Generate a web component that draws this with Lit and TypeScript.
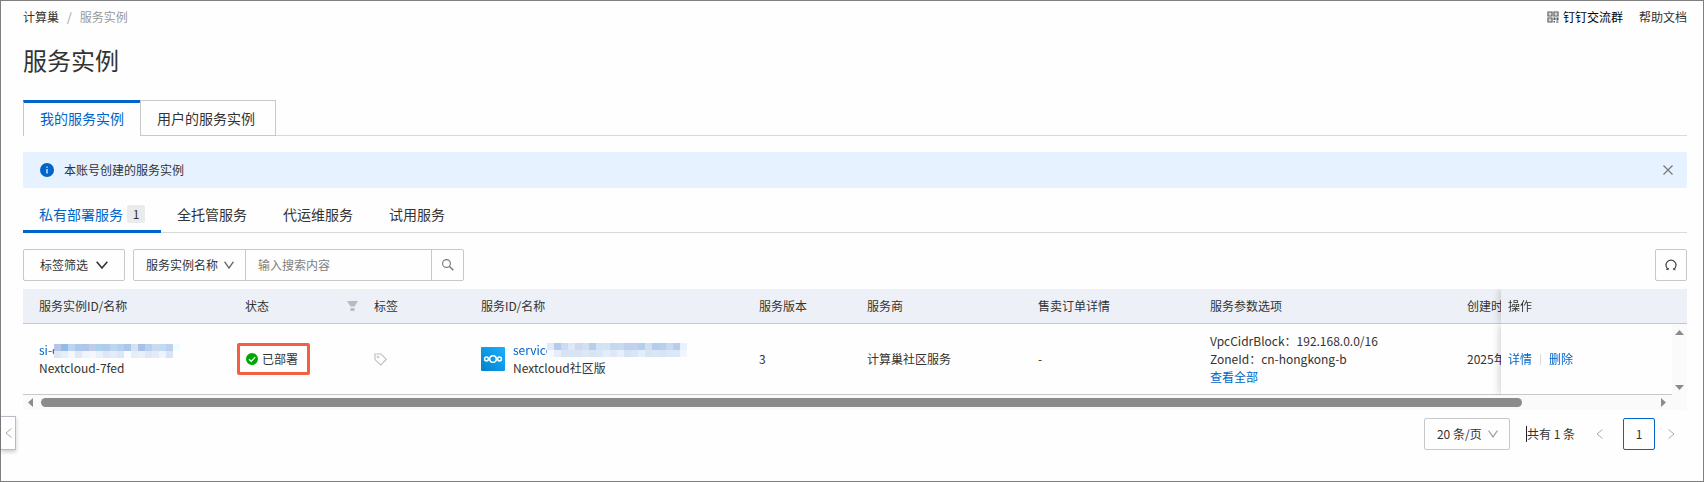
import { LitElement, html, css, svg } from "lit";
import { customElement } from "lit/decorators.js";

const MASK_A = [
  ["#b8c6e6", "#92bbe6", "#bcd4f0", "#adc8ea", "#adc6ea", "#c0cdea", "#acd0ec", "#b2cbec", "#bcd6f0", "#b4d0ee", "#acc6ea", "#d8e0f4", "#a6c0e6", "#b8cfee", "#cdd9ee", "#bfdcf2", "#bdd0ee", "#f2fbff"],
  ["#dce8f6", "#e6eefa", "#f4f8fe", "#dfe9f6", "#eef4fc", "#f4f8fe", "#e9f0fa", "#dce8f6", "#e2ecf8", "#dae8f6", "#f8fbff", "#e4eef8", "#e6f0fa", "#dde8f6", "#e2ecf6", "#eef4fb", "#d6e4f4", "#fefefe"],
];
const MASK_B = [
  ["#dfeaf6", "#b4cbec", "#cbdcf2", "#dde8f6", "#cfd9ee", "#cfe0f2", "#b8cfec", "#d3e2f4", "#d4e2f4", "#c3d9f0", "#c8daf0", "#bed2ee", "#c3d0ea", "#b2cfee", "#d0e0f2", "#b6cdec", "#b9d0ec", "#c9daf0", "#b6cdec", "#e8f2fc"],
  ["#f6fafe", "#e7eefa", "#d8e4f4", "#d6e4f4", "#d8e4f4", "#dce8f6", "#d8e4f4", "#d9e6f6", "#e2eefa", "#dde9f6", "#e6f0fa", "#d3e2f4", "#d9e6f6", "#e2eefa", "#d8e4f4", "#d9e6f6", "#d6e4f4", "#dbe7f6", "#dbe9f6", "#eff6fd"],
];

const mosaic = (rows: string[][]) => html`<svg class="mosaic" width=${rows[0].length * 7} height="14" shape-rendering="crispEdges" aria-hidden="true">
  ${rows.map((r, y) => r.map((c, x) => svg`<rect x=${x * 7} y=${y * 7} width="7" height="7" fill=${c}></rect>`))}
</svg>`;

const chevron = (w: number, h: number, color: string, sw: number) => html`<svg width=${w} height=${h} viewBox="0 0 12 8" preserveAspectRatio="none" aria-hidden="true">
  <path d="M.7 .7L6 7L11.3 .7" fill="none" stroke=${color} stroke-width=${sw}></path>
</svg>`;

@customElement("app-root")
export class AppRoot extends LitElement {
  static styles = css`
    :host {
      display: block;
      font-family: "Noto Sans CJK SC", sans-serif;
      font-size: 12px;
      line-height: 18px;
      color: #333;
    }
    * { box-sizing: border-box; }
    button, input, select { font: inherit; color: inherit; margin: 0; }
    button { cursor: pointer; padding: 0; background: none; border: 0; }
    a { color: #0064c8; text-decoration: none; }
    svg { display: block; flex: none; }
    .page {
      position: relative;
      min-height: 100vh;
      border: 1px solid #7f7f7f;
      background: #fefefe;
      padding: 6px 16px 31px 22px;
    }
    .top { display: flex; justify-content: space-between; align-items: center; height: 20px; }
    .crumbs, .help { display: flex; align-items: center; }
    .crumbs { gap: 8px; color: #999; }
    .crumbs a, .help a { color: #333; }
    .help { gap: 16px; }
    .help .ding { display: flex; align-items: center; gap: 4px; color: #000; }
    h1 { margin: 15px 0 22px; font-size: 24px; line-height: 36px; font-weight: 400; }
    .cards { display: flex; height: 36px; border-bottom: 1px solid #d9d9d9; }
    .cards button {
      height: 36px;
      padding: 0 20px 0 16px;
      font-size: 14px;
      border: 1px solid #c8c8c8;
    }
    .cards .on {
      padding: 0 16px 3px;
      color: #0064c8;
      background: #fefefe;
      border-top: 3px solid #0064c8;
      border-right: 0;
      border-bottom: 0;
    }
    .alert {
      display: flex;
      align-items: center;
      height: 36px;
      margin-top: 16px;
      padding: 0 14px 0 17px;
      gap: 10px;
      background: #e6f2ff;
      border-radius: 2px;
    }
    .alert .msg { flex: 1; }
    .tabs { display: flex; height: 45px; border-bottom: 1px solid #d9d9d9; }
    .tabs button {
      display: flex;
      align-items: center;
      gap: 4px;
      height: 45px;
      padding: 6px 20px 0 16px;
      font-size: 14px;
    }
    .tabs .on { padding: 9px 16px 0; color: #0064c8; border-bottom: 3px solid #0064c8; }
    .count {
      min-width: 18px;
      border-radius: 2px;
      background: #ebebeb;
      color: #333;
      font-size: 12px;
      text-align: center;
    }
    .tools { display: flex; gap: 8px; margin: 16px 0 8px; }
    .tools > button, .search { height: 32px; border: 1px solid #c8c8c8; border-radius: 2px; }
    .filter { display: flex; align-items: center; gap: 8px; padding: 0 16px; }
    .search { display: flex; }
    .picker { position: relative; display: flex; align-items: center; }
    .picker svg { position: absolute; right: 11px; pointer-events: none; }
    .picker select {
      appearance: none;
      width: 100%;
      height: 100%;
      padding: 0 12px;
      border: 0;
      background: none;
      outline: 0;
    }
    .search .picker { width: 111px; }
    .search input {
      width: 187px;
      padding: 0 12px;
      border: 0;
      border-left: 1px solid #c8c8c8;
      border-right: 1px solid #c8c8c8;
      background: none;
      outline: 0;
    }
    .search input::placeholder { color: #808080; opacity: 1; }
    .search button { width: 31px; display: grid; place-items: center; }
    .tools .refresh { width: 32px; margin-left: auto; display: grid; place-items: center; }
    .grid { position: relative; overflow: hidden; }
    table {
      width: 1802px;
      min-width: 100%;
      table-layout: fixed;
      border-collapse: separate;
      border-spacing: 0;
    }
    th, td { padding: 0 8px; text-align: left; font-weight: 400; white-space: nowrap; border-bottom: 1px solid #c8c8c8; }
    th { height: 35px; background: #edf1f7; }
    td { height: 71px; padding: 8px; }
    th:first-child, td:first-child { padding-left: 16px; }
    .c1 { width: 214px; } .c2 { width: 129px; } .c3 { width: 107px; } .c4 { width: 278px; }
    .c5 { width: 108px; } .c6 { width: 171px; } .c7 { width: 172px; } .c8 { width: 257px; }
    .c10 { width: 186px; }
    th.fixed, td.fixed { position: sticky; right: 0; padding-left: 7px; box-shadow: -1px 0 8px rgba(0, 0, 0, 0.2); clip-path: inset(0 0 0 -12px); }
    td.fixed { background: #fefefe; }
    .th { display: flex; justify-content: space-between; align-items: center; }
    .id { position: relative; }
    .mosaic { position: absolute; top: 3px; left: 15px; }
    .svc .mosaic { left: 34px; top: 2px; }
    .svcrow { display: flex; align-items: center; gap: 8px; }
    .status {
      display: inline-flex;
      align-items: center;
      gap: 4px;
      height: 32px;
      margin-left: -8px;
      padding: 0 9px 0 6px;
      border: 3px solid #f4603f;
      border-radius: 2px;
    }
    .acts { display: flex; align-items: center; gap: 8px; }
    .acts i { width: 1px; height: 11px; background: #dcdcdc; }
    .vbar {
      position: absolute;
      top: 35px;
      right: 0;
      bottom: 15px;
      width: 15px;
      padding: 6px 0 5px;
      display: flex;
      flex-direction: column;
      align-items: center;
      justify-content: space-between;
      background: #fafafa;
    }
    .hbar { display: flex; align-items: center; height: 15px; padding: 0 21px 0 5px; gap: 8px; background: #fafafa; }
    .track { flex: 1; }
    .thumb { height: 9px; border-radius: 5px; background: #8b8b8b; }
    .pager { display: flex; align-items: center; justify-content: flex-end; margin-top: 8px; }
    .pager .picker { width: 86px; height: 32px; border: 1px solid #c8c8c8; border-radius: 2px; }
    .total { margin-left: 16px; border-left: 1px solid #222; height: 16px; line-height: 16px; }
    .pager button { width: 32px; height: 32px; display: grid; place-items: center; }
    .pager .prev { margin: 0 8px; }
    .pager .cur { border: 1px solid #0064c8; border-radius: 2px; }
    .side {
      position: absolute;
      left: 0;
      bottom: 31px;
      width: 15px;
      height: 34px;
      display: grid;
      place-items: center;
      background: #fff;
      border: 1px solid #b8bcc4;
      border-left: 0;
      box-shadow: 0 2px 4px rgba(0, 0, 0, 0.2);
    }
  `;

  render() {
    return html`
      <main class="page">
        <header class="top">
          <nav class="crumbs"><a href="#">计算巢</a><span>/</span><span>服务实例</span></nav>
          <div class="help">
            <a class="ding" href="#">
              <svg width="12" height="12" viewBox="0 0 12 12" aria-hidden="true">
                <path d="M1 1h4v4H1zM7 1h4v4H7zM1 7h4v4H1z" fill="none" stroke="#555" stroke-width="1.2"></path>
                <path d="M2.500 2.500h1v1h-1zM8.500 2.500h1v1h-1zM2.500 8.500h1v1h-1zM6.500 6.500h2v2.500h-2zM9.500 6.500h2v3h-2zM6.500 10h1.500v1.500H6.500zM9 10.500h2.500v1H9z" fill="#555"></path>
              </svg>
              <span>钉钉交流群</span>
            </a>
            <a href="#">帮助文档</a>
          </div>
        </header>

        <h1>服务实例</h1>

        <div class="cards" role="tablist">
          <button class="on" role="tab" aria-selected="true">我的服务实例</button>
          <button role="tab" aria-selected="false">用户的服务实例</button>
        </div>

        <div class="alert" role="status">
          <svg width="14" height="14" viewBox="0 0 14 14" aria-hidden="true">
            <circle cx="7" cy="7" r="7" fill="#0064c8"></circle>
            <path d="M7 6v4.500M7 3.500v1.200" stroke="#fff" stroke-width="1.200"></path>
          </svg>
          <span class="msg">本账号创建的服务实例</span>
          <button aria-label="关闭">
            <svg width="10" height="10" viewBox="0 0 10 10"><path d="M.5.5l9 9M9.500.5l-9 9" stroke="#777" stroke-width="1.200"></path></svg>
          </button>
        </div>

        <div class="tabs" role="tablist">
          <button class="on" role="tab" aria-selected="true">私有部署服务<span class="count">1</span></button>
          <button role="tab" aria-selected="false">全托管服务</button>
          <button role="tab" aria-selected="false">代运维服务</button>
          <button role="tab" aria-selected="false">试用服务</button>
        </div>

        <div class="tools">
          <button class="filter">标签筛选${chevron(12, 8, "#333", 1.6)}</button>
          <div class="search">
            <div class="picker">
              <select aria-label="搜索字段"><option>服务实例名称</option></select>
              ${chevron(10, 8, "#666", 1.5)}
            </div>
            <input type="text" placeholder="输入搜索内容" aria-label="搜索内容" />
            <button aria-label="搜索">
              <svg width="12" height="12" viewBox="0 0 12 12">
                <circle cx="4.500" cy="4.500" r="3.900" fill="none" stroke="#777" stroke-width="1.100"></circle>
                <path d="M7.300 7.300L11.300 11.300" stroke="#777" stroke-width="1.400"></path>
              </svg>
            </button>
          </div>
          <button class="refresh" aria-label="刷新">
            <svg width="12" height="12" viewBox="0 0 12 12">
              <path d="M3.200 10.300A5 5 0 1 1 8.800 10.300" fill="none" stroke="#444" stroke-width="1.200"></path>
              <path d="M1.200 10.500h2.200V9M10.500 10.700H8.600V9" fill="none" stroke="#444" stroke-width=".9"></path>
            </svg>
          </button>
        </div>

        <div class="grid">
          <table>
            <thead>
              <tr>
                <th class="c1">服务实例ID/名称</th>
                <th class="c2">
                  <div class="th">状态
                    <svg width="11" height="10" viewBox="0 0 11 10" aria-hidden="true"><path d="M0 0h11L7.500 5.500h-4zM3.500 7h4v3h-4z" fill="#b9bbbf"></path></svg>
                  </div>
                </th>
                <th class="c3">标签</th>
                <th class="c4">服务ID/名称</th>
                <th class="c5">服务版本</th>
                <th class="c6">服务商</th>
                <th class="c7">售卖订单详情</th>
                <th class="c8">服务参数选项</th>
                <th class="c9">创建时</th>
                <th class="c10 fixed">操作</th>
              </tr>
            </thead>
            <tbody>
              <tr>
                <td>
                  <div class="id"><a href="#">si-c</a>${mosaic(MASK_A)}</div>
                  <div>Nextcloud-7fed</div>
                </td>
                <td>
                  <span class="status">
                    <svg width="12" height="12" viewBox="0 0 12 12" aria-hidden="true">
                      <circle cx="6" cy="6" r="6" fill="#00a700"></circle>
                      <path d="M3 6.200l2.200 2.100L9.200 4.200" fill="none" stroke="#fff" stroke-width="1.200"></path>
                    </svg>已部署</span>
                </td>
                <td>
                  <svg width="13" height="13" viewBox="0 0 13 13" aria-hidden="true">
                    <path d="M1 1h6l5.300 5.300-5.600 5.600L1 6.600z" fill="none" stroke="#bfbfbf" stroke-width="1.100"></path>
                    <circle cx="4" cy="4" r=".9" fill="none" stroke="#bfbfbf"></circle>
                  </svg>
                </td>
                <td>
                  <div class="svcrow">
                    <svg width="24" height="24" viewBox="0 0 24 24" aria-hidden="true">
                      <defs><linearGradient id="nc" x1="0" y1="1" x2="1" y2="0"><stop offset="0" stop-color="#0082c9"></stop><stop offset="1" stop-color="#1cafff"></stop></linearGradient></defs>
                      <rect width="24" height="24" rx="1" fill="url(#nc)"></rect>
                      <g fill="none" stroke="#fff" stroke-width="1.500"><circle cx="12" cy="12" r="3.300"></circle><circle cx="5.500" cy="12" r="1.900"></circle><circle cx="18.500" cy="12" r="1.900"></circle></g>
                    </svg>
                    <div>
                      <div class="id svc"><a href="#">service</a>${mosaic(MASK_B)}</div>
                      <div>Nextcloud社区版</div>
                    </div>
                  </div>
                </td>
                <td>3</td>
                <td>计算巢社区服务</td>
                <td>-</td>
                <td>
                  <div>VpcCidrBlock：192.168.0.0/16</div>
                  <div>ZoneId：cn-hongkong-b</div>
                  <div><a href="#">查看全部</a></div>
                </td>
                <td>2025年</td>
                <td class="fixed"><div class="acts"><a href="#">详情</a><i></i><a href="#">删除</a></div></td>
              </tr>
            </tbody>
          </table>
          <div class="vbar" aria-hidden="true">
            <svg width="9" height="5"><path d="M0 5L4.500 0L9 5z" fill="#8b8b8b"></path></svg>
            <svg width="9" height="5"><path d="M0 0L4.500 5L9 0z" fill="#8b8b8b"></path></svg>
          </div>
          <div class="hbar" aria-hidden="true">
            <svg width="5" height="9"><path d="M5 0L0 4.500L5 9z" fill="#8b8b8b"></path></svg>
            <div class="track"><div class="thumb" style="width:${(1664 / 1811) * 100}%"></div></div>
            <svg width="5" height="9"><path d="M0 0L5 4.500L0 9z" fill="#8b8b8b"></path></svg>
          </div>
        </div>

        <div class="pager">
          <div class="picker">
            <select aria-label="每页条数"><option>20 条/页</option></select>
            ${chevron(10, 8, "#999", 1.300)}
          </div>
          <span class="total">共有 1 条</span>
          <button class="prev" aria-label="上一页"><svg width="7" height="10" viewBox="0 0 7 10"><path d="M6.500.5L1 5l5.500 4.500" fill="none" stroke="#aaa"></path></svg></button>
          <button class="cur" aria-current="page">1</button>
          <button aria-label="下一页"><svg width="7" height="10" viewBox="0 0 7 10"><path d="M.5.5L6 5L.5 9.500" fill="none" stroke="#aaa"></path></svg></button>
        </div>

        <button class="side" aria-label="展开侧栏"><svg width="7" height="10" viewBox="0 0 7 10"><path d="M6.500.5L1 5l5.500 4.500" fill="none" stroke="#aaa"></path></svg></button>
      </main>
    `;
  }
}
